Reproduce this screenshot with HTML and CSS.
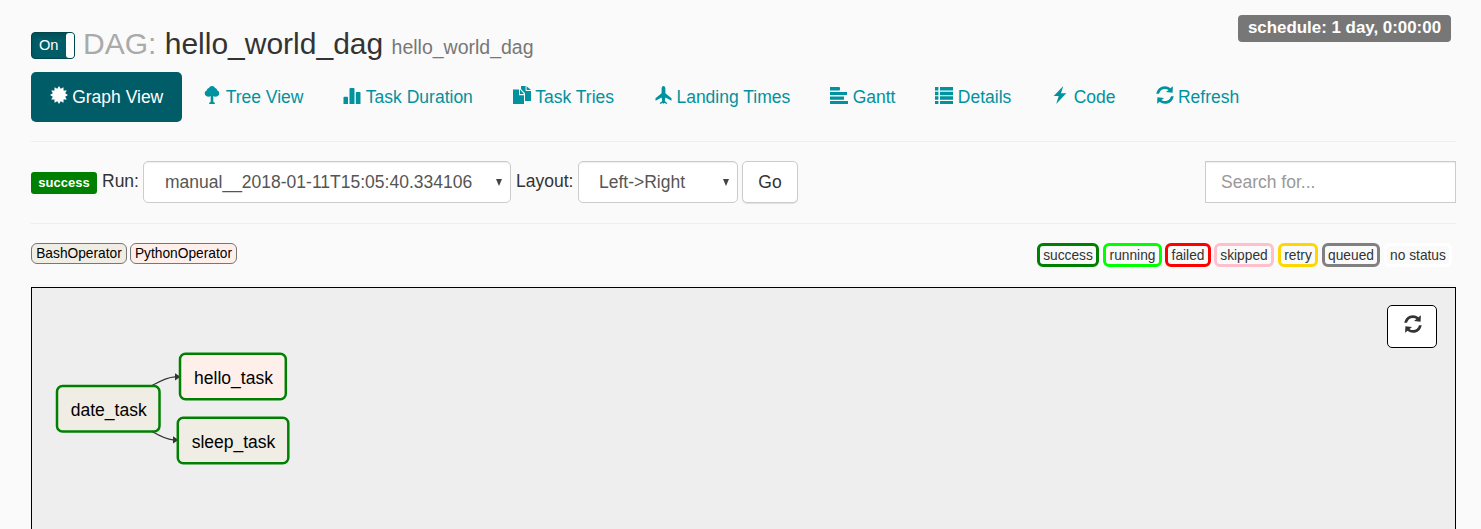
FILE: index.html
```html
<!DOCTYPE html>
<html lang="en">
<head>
<meta charset="utf-8">
<title>DAG: hello_world_dag</title>
<link rel="stylesheet" href="styles.css">
</head>
<body>
<svg class="defs" width="0" height="0">
  <symbol id="i-refresh" viewBox="0 0 18 18">
    <path d="M.3 7.800C1 3.300 4.500.2 8.900.2c2 0 4 .7 5.500 2L16.900.2 16.600 6.800 10 6.100 12.500 4.100C11.500 3.300 10.300 2.900 8.900 2.900c-3 0-5.200 2-5.900 4.900z"/>
    <path d="M17.700 10.200C17 14.700 13.500 17.800 9.100 17.800c-2 0-4-.7-5.500-2L1.100 17.800 1.400 11.200 8 11.900 5.500 13.900c1 .8 2.200 1.200 3.600 1.200 3 0 5.200-2 5.900-4.900z"/>
  </symbol>
</svg>
<header class="header">
  <div class="toggle"><span class="toggle-on">On</span><span class="toggle-handle"></span></div>
  <h3 class="title"><span class="title-label">DAG:</span> hello_world_dag <small>hello_world_dag</small></h3>
  <span class="schedule">schedule: 1 day, 0:00:00</span>
</header>
<nav class="nav">
  <a class="tab active"><svg class="icon" viewBox="0 0 18 18"><path d="M9 0L10.660 2.820 13.500 1.200 13.530 4.470 16.800 4.500 15.180 7.340 18 9 15.180 10.660 16.800 13.500 13.530 13.530 13.500 16.800 10.660 15.180 9 18 7.340 15.180 4.500 16.800 4.470 13.530 1.200 13.500 2.820 10.660 0 9 2.820 7.340 1.200 4.500 4.470 4.470 4.500 1.200 7.340 2.820z"/></svg><span>Graph View</span></a>
  <a class="tab"><svg class="icon" viewBox="0 0 18 18"><path d="M9 0c1.600 0 2.600.8 3 2 1.200.2 2 1.100 2 2.200 1.400.5 2.300 1.600 2.300 3 0 2.200-1.900 3.600-3.900 3.600-.7 0-1.500-.2-2.100-.7v5.200c0 .7.700 1.200 1.500 1.300V18H6.200v-1.400c.8-.1 1.500-.6 1.500-1.300v-5.200c-.6.500-1.400.7-2.100.7C3.600 10.800 1.700 9.400 1.700 7.200c0-1.400.9-2.500 2.300-3C4 3.100 4.800 2.200 6 2c.4-1.200 1.400-2 3-2z"/></svg><span>Tree View</span></a>
  <a class="tab"><svg class="icon" viewBox="0 0 18 18"><path d="M.5 18v-6.500q0-.8.800-.8h2.900q.8 0 .8.800V18zM6.500 18V3q0-1 1-1H10.500q1 0 1 1v15zM12.800 18V6.800q0-.8.800-.8h3.100q.8 0 .8.800V18z"/></svg><span>Task Duration</span></a>
  <a class="tab"><svg class="icon" viewBox="0 0 18 18"><path d="M0 3.500h6v5.800h5V18H0zM7 3.500l4 4.500H7zM8 0h4.600v5H18v10h-6V7.300L8 3zM13.600.3L18 4h-4.400z"/></svg><span>Task Tries</span></a>
  <a class="tab"><svg class="icon" viewBox="0 0 18 18"><path d="M9.500 0c1.100 0 1.900 1.300 1.900 2.800v4.500l6.100 5v2.400l-6.100-3.300-.6 3.500 2.300 2V18L10.100 17 9.500 18l-.6-1-3 1v-1.100l2.300-2-.6-3.500-6.100 3.300v-2.400l6.100-5V2.800C7.600 1.300 8.400 0 9.500 0z"/></svg><span>Landing Times</span></a>
  <a class="tab"><svg class="icon" viewBox="0 0 18 18"><path d="M0 1h9q1 0 1 1v1.500q0 1-1 1H0zM0 6h17v3H0zM0 10.500h14v3.200H0zM0 15h18v3H0z"/></svg><span>Gantt</span></a>
  <a class="tab"><svg class="icon" viewBox="0 0 18 18"><path d="M0 1h3.400v3.600H0zM5 1h13v3.600H5zM0 5.800h3.400v3.400H0zM5 5.800h13v3.400H5zM0 10.300h3.400v3.400H0zM5 10.300h13v3.400H5zM0 15h3.400v3H0zM5 15h13v3H5z"/></svg><span>Details</span></a>
  <a class="tab"><svg class="icon" viewBox="0 0 18 18"><path d="M12.300 0L2.700 10h5L5.200 18 15.300 7.300H10z"/></svg><span>Code</span></a>
  <a class="tab"><svg class="icon"><use href="#i-refresh"/></svg><span>Refresh</span></a>
</nav>
<hr class="rule">
<div class="controls">
  <span class="state">success</span>
  <span class="run-label">Run:</span>
  <div class="select run"><span>manual__2018-01-11T15:05:40.334106</span><i class="arrow"></i></div>
  <span class="layout-label">Layout:</span>
  <div class="select layout"><span>Left-&gt;Right</span><i class="arrow"></i></div>
  <button class="go">Go</button>
  <input class="search" type="text" placeholder="Search for...">
</div>
<hr class="rule">
<div class="legend">
  <span class="operator bash">BashOperator</span>
  <span class="operator python">PythonOperator</span>
  <div class="statuses">
    <span class="status success">success</span>
    <span class="status running">running</span>
    <span class="status failed">failed</span>
    <span class="status skipped">skipped</span>
    <span class="status retry">retry</span>
    <span class="status queued">queued</span>
    <span class="status none">no status</span>
  </div>
</div>
<main class="graph">
  <svg class="dag" width="1423" height="241" viewBox="32 288 1423 241">
    <g class="edges">
      <path d="M152 385.500Q167 377 175 376.800"/>
      <path d="M152 431.500Q166 439.500 173 439.800"/>
    </g>
    <path class="head" d="M175 373.200l5.500 3.600-5.500 3.600zM173 436.200l5.500 3.800-5.500 3.600z"/>
    <rect class="node bash-node" x="57" y="386" width="102.500" height="45.500" rx="5.500"/>
    <rect class="node python-node" x="180" y="353.800" width="105.800" height="45.500" rx="5.500"/>
    <rect class="node bash-node" x="177.800" y="417.800" width="110.500" height="45.500" rx="5.500"/>
    <text x="70.700" y="415.500" textLength="76">date_task</text>
    <text x="194" y="383.500" textLength="79">hello_task</text>
    <text x="191.700" y="447.500" textLength="83.500">sleep_task</text>
  </svg>
  <button class="reload"><svg class="icon"><use href="#i-refresh"/></svg></button>
</main>
</body>
</html>
```
FILE: styles.css
```css
* { box-sizing: border-box; }
body {
  display: flex;
  flex-direction: column;
  margin: 0;
  padding: 0 25px 0 31px;
  height: 529px;
  background: #fafafa;
  color: #333;
  font: 17.5px/25px "Liberation Sans", Arial, sans-serif;
}
.defs { display: block; flex: none; height: 0; }
.header { display: flex; flex: none; height: 72px; align-items: flex-start; }
.toggle {
  display: flex;
  width: 44px;
  height: 27px;
  margin: 32px 8px 0 0;
  border: 1px solid #00474d;
  border-radius: 4px;
  background: #005c66;
  box-shadow: inset 0 3px 4px rgba(0, 0, 0, .15);
  color: #fff;
  font-size: 14.6px;
  line-height: 24px;
}
.toggle-on { width: 34px; padding-left: 7px; }
.toggle-handle { width: 8px; border-radius: 3px; background: #fff; }
.title { margin: 27px 0 0; font-size: 30px; line-height: 33px; font-weight: 400; white-space: nowrap; }
.title-label { color: #aaa; }
.title small { color: #777; font-size: 19.5px; }
.schedule {
  width: 213px;
  height: 27px;
  margin: 15px 5px 0 auto;
  border-radius: 4px;
  background: #777;
  color: #fff;
  font-size: 16.9px;
  font-weight: 700;
  line-height: 25px;
  text-align: center;
  white-space: nowrap;
}
.nav { display: flex; flex: none; gap: 2.5px; height: 50px; }
.tab { display: flex; gap: 4.4px; padding: 12.5px 18.75px; border-radius: 5px; color: #00929f; white-space: nowrap; }
.tab.active { background: #005c66; color: #fff; }
.icon { display: block; flex: none; width: 18px; height: 18px; margin-top: 1.5px; fill: currentColor; }
.rule { flex: none; width: 100%; height: 1px; margin: 19px 0; border: 0; background: #eee; }
.controls { display: flex; flex: none; height: 43px; align-items: flex-start; white-space: nowrap; }
.state {
  width: 66px;
  height: 22px;
  margin: 11px 5px 0 0;
  border-radius: 3px;
  background: #008000;
  color: #fff;
  font-size: 13px;
  font-weight: 700;
  line-height: 21px;
  text-align: center;
}
.run-label { width: 41px; margin-top: 8px; }
.layout-label { width: 62px; margin: 8px 0 0 5px; }
.select {
  display: flex;
  align-items: center;
  justify-content: space-between;
  height: 42px;
  padding: 0 8px 0 21px;
  border: 1px solid #ccc;
  border-radius: 5px;
  background: #fff;
  box-shadow: inset 0 1px 1px rgba(0, 0, 0, .075);
  color: #555;
}
.run { width: 368px; }
.layout { width: 160px; padding-left: 20px; }
.arrow { border: solid transparent; border-width: 7px 3.5px 0; border-top-color: #444; }
.go {
  width: 56px;
  height: 42px;
  margin: 0 0 0 4px;
  padding: 0;
  border: 1px solid #ccc;
  border-radius: 5px;
  background: #fff;
  box-shadow: 0 1px 1px rgba(0, 0, 0, .1);
  color: #333;
  font: inherit;
}
.search {
  width: 251px;
  height: 42px;
  margin-left: auto;
  padding: 0 15px;
  border: 1px solid #ccc;
  border-radius: 0;
  background: #fff;
  box-shadow: inset 0 1px 1px rgba(0, 0, 0, .075);
  font: inherit;
}
.search::placeholder { color: #999; opacity: 1; }
.legend { display: flex; flex: none; height: 43px; align-items: flex-start; font-size: 13.75px; white-space: nowrap; border-bottom: 1px solid #f4f4f4; }
.operator { height: 21px; margin-right: 3px; border: 1px solid #777; border-radius: 6px; color: #000; line-height: 19px; text-align: center; }
.bash { width: 96px; background: #f0ede4; }
.python { width: 107px; background: #ffefeb; }
.statuses { display: flex; gap: 4px; margin-left: auto; padding-right: 4px; }
.status { height: 24px; border: 3px solid; border-radius: 6px; line-height: 19px; text-align: center; }
.success { width: 62px; border-color: green; }
.running { width: 59px; border-color: lime; }
.failed { width: 46px; margin-left: -1px; border-color: red; }
.skipped { width: 60px; margin-left: -1px; border-color: pink; }
.retry { width: 40px; border-color: gold; }
.queued { width: 58px; border-color: gray; }
.none { width: 68px; border-color: #fff; }
.graph { position: relative; flex: 1; min-height: 0; margin-top: 1px; border: 1px solid #000; border-bottom: 0; background: #eee; }
.dag { display: block; }
.dag text { fill: #000; font-size: 17.5px; }
.edges path { fill: none; stroke: #333; stroke-width: 1.3; }
.head { fill: #333; }
.node { stroke: green; stroke-width: 2.5; }
.bash-node { fill: #f0ede4; }
.python-node { fill: #ffefeb; }
.reload {
  position: absolute;
  top: 17px;
  right: 18px;
  display: flex;
  justify-content: center;
  width: 50px;
  height: 43px;
  padding: 7.5px 0 0 1px;
  border: 1px solid #000;
  border-radius: 5px;
  background: #fff;
  color: #333;
}
```
